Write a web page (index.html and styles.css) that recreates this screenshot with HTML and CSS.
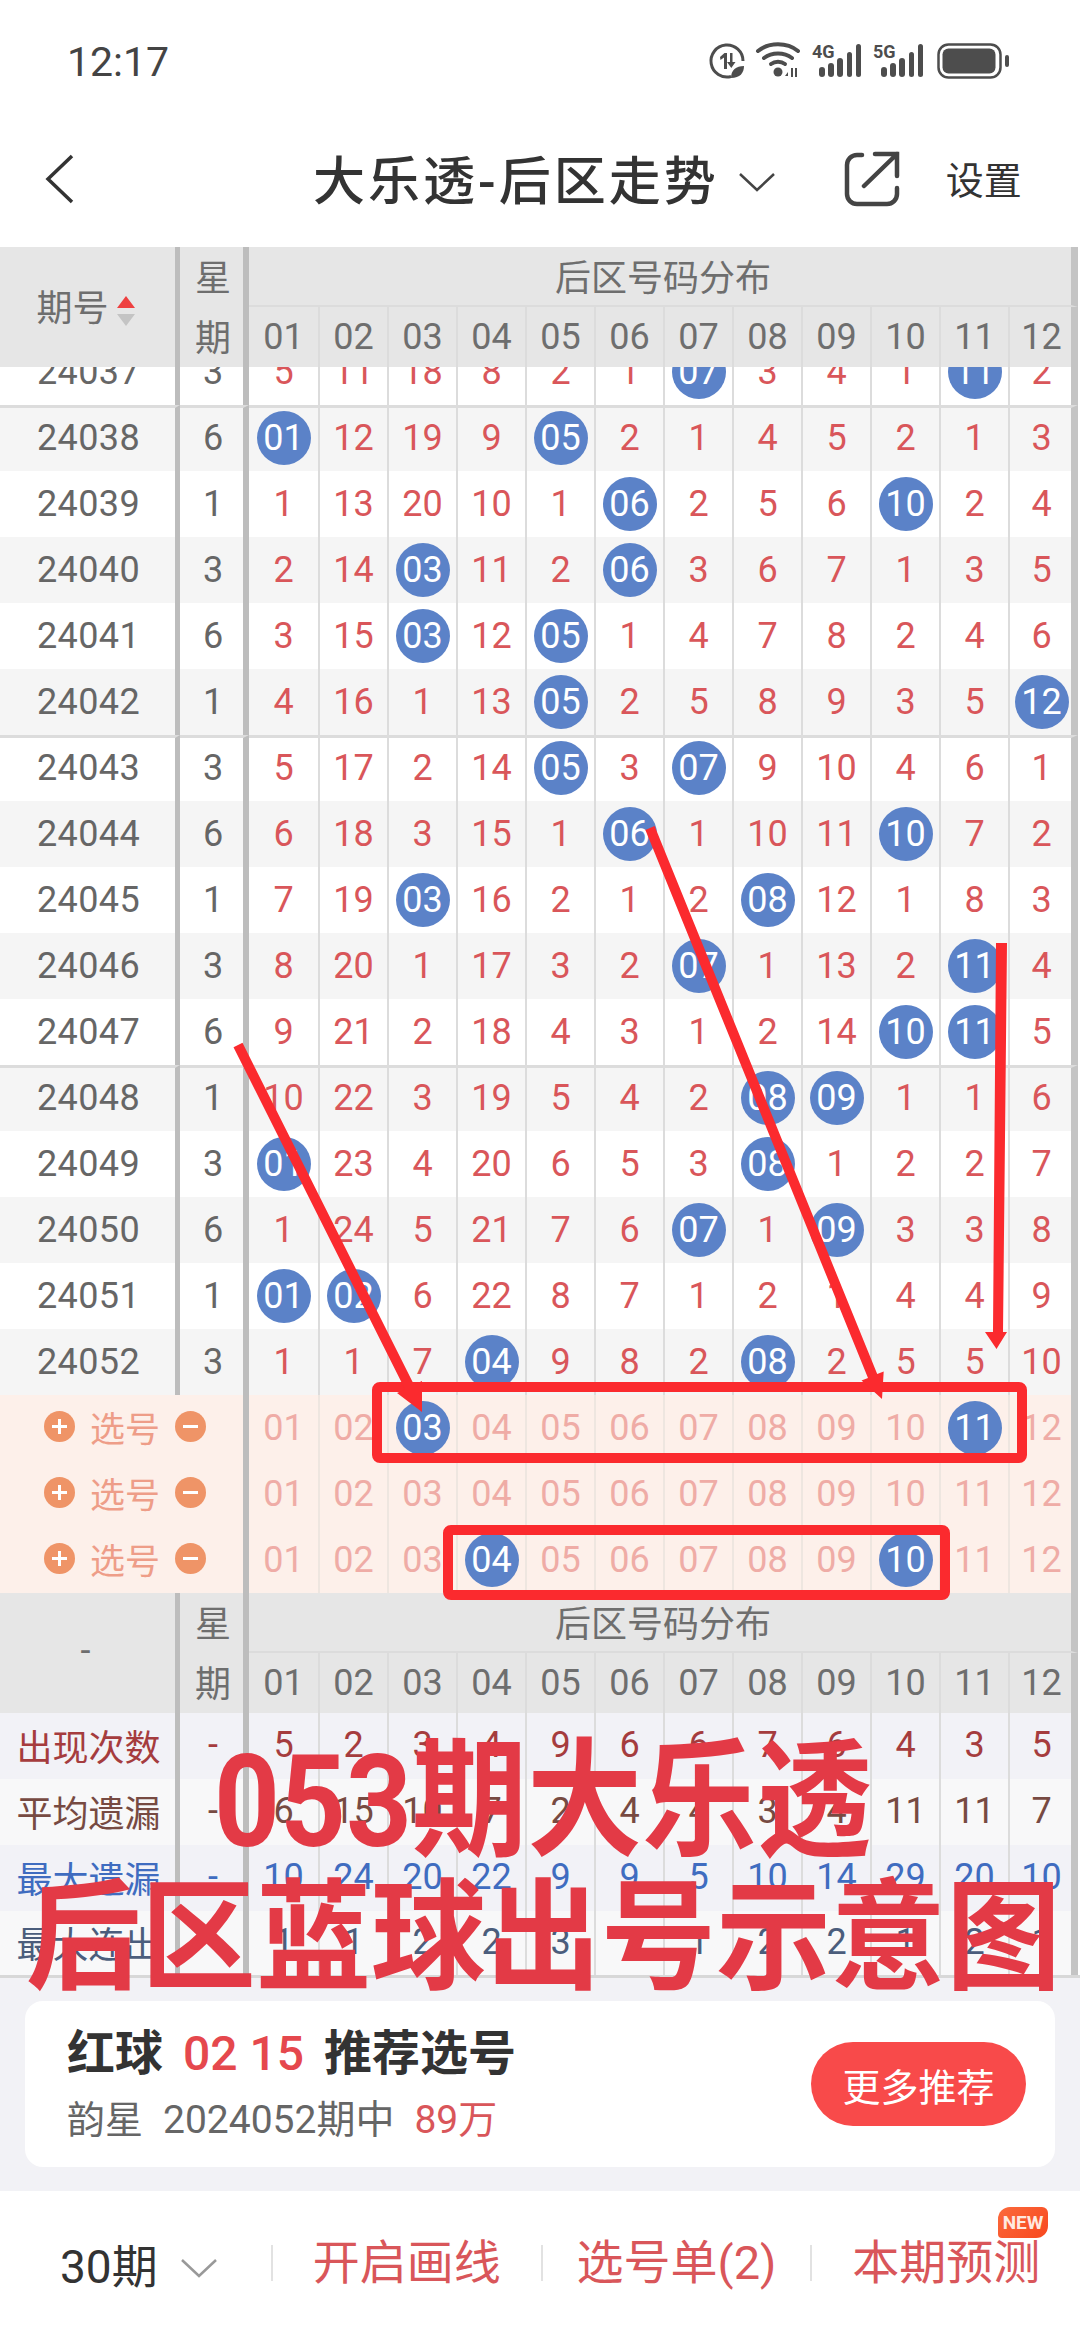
FILE: index.html
```html
<!DOCTYPE html>
<html lang="zh">
  <head>
    <meta charset="utf-8" />
    <title>大乐透-后区走势</title>
    <link rel="stylesheet" href="styles.css">
  </head>
  <body>
    <div class="page">
      <div class="status-bar">
        <span class="clock">12:17</span>
        <svg class="status-icons" width="220" height="40" viewBox="707 41 220 40" fill="#4d4d4d">
          <!-- data saver -->
          <path d="M731 76.500 A16 16 0 1 1 743 61" fill="none" stroke="#4d4d4d" stroke-width="3"/>
          <path d="M720 57l4.500-4h2.500v16h-3v-11.500l-3.500 2.500zM730 53h2.500v9h3l-4.200 6-4.300-6h3z"/>
          <path d="M731 78c0-8 5-12 13-12 0 7-4 12-13 12z"/>
          <!-- wifi -->
          <g fill="none" stroke="#4d4d4d" stroke-width="4" stroke-linecap="round">
            <path d="M758 51c11-9 29-9 40 0"/>
            <path d="M764 58c8-6 20-6 28 0"/>
            <path d="M771 64c4-3 10-3 14 0"/>
          </g>
          <circle cx="778" cy="72" r="4.500"/>
          <path d="M788 76v-4l-3 4zM791 68h2v9h-2zM795 68h2v9h-2z"/>
          <!-- 4G -->
          <text x="812" y="58" class="net-label">4G</text>
          <rect x="819" y="67" width="6" height="10" rx="3"/>
          <rect x="828" y="63" width="6" height="14" rx="3"/>
          <rect x="837" y="58" width="6" height="19" rx="3"/>
          <rect x="847" y="52" width="5" height="25" rx="2.500"/>
          <rect x="856" y="44" width="5" height="33" rx="2.500"/>
          <!-- 5G -->
          <text x="873" y="58" class="net-label">5G</text>
          <rect x="881" y="67" width="6" height="10" rx="3"/>
          <rect x="890" y="63" width="6" height="14" rx="3"/>
          <rect x="899" y="58" width="6" height="19" rx="3"/>
          <rect x="909" y="52" width="5" height="25" rx="2.500"/>
          <rect x="918" y="44" width="5" height="33" rx="2.500"/>
        </svg>
        <svg class="battery" width="72" height="36" viewBox="0 0 72 36">
          <rect x="1.500" y="1.500" width="62" height="33" rx="10" fill="none" stroke="#4d4d4d" stroke-width="2.500"/>
          <rect x="5.500" y="5.500" width="53" height="25" rx="6" fill="#4d4d4d"/>
          <rect x="68" y="12" width="4" height="12" rx="2" fill="#4d4d4d"/>
        </svg>
      </div>

      <div class="nav-bar">
        <svg class="nav-back" width="30" height="50" viewBox="0 0 30 50">
          <path d="M27 2 L3 25 L27 48" fill="none" stroke="#333" stroke-width="3.500"/>
        </svg>
        <h1 class="nav-title">大乐透-后区走势</h1>
        <svg class="nav-caret" width="38" height="20" viewBox="0 0 38 20">
          <path d="M2 2 L19 18 L36 2" fill="none" stroke="#444" stroke-width="2.500"/>
        </svg>
        <svg class="nav-share" width="56" height="56" viewBox="0 0 56 56">
          <path d="M18 4 H13 A10 10 0 0 0 3 14 V43 A10 10 0 0 0 13 53 H43 A10 10 0 0 0 53 43 V37" fill="none" stroke="#444" stroke-width="4.500" stroke-linecap="round"/>
          <path d="M20 35 L53 3 M31 3 H53 V25" fill="none" stroke="#444" stroke-width="4.500" stroke-linecap="round"/>
        </svg>
        <span class="nav-setting">设置</span>
      </div>

      <table class="trend trend-head">
        <colgroup><col class="c-period"><col class="c-week"><col class="c-first"><col span="10" class="c-num"><col class="c-last"></colgroup>
        <tr class="head-top">
          <th rowspan="2" class="bar-a">期号<span class="sort"><i class="sort-up"></i><i class="sort-down"></i></span></th>
          <th class="bar-b">星</th>
          <th colspan="12" class="head-group bar-end">后区号码分布</th>
        </tr>
        <tr class="head-nums">
          <th class="bar-b">期</th>
          <th>01</th><th>02</th><th>03</th><th>04</th><th>05</th><th>06</th><th>07</th><th>08</th><th>09</th><th>10</th><th>11</th><th class="bar-end">12</th>
        </tr>
      </table>

      <div class="trend-scroll">
        <table class="trend trend-body">
          <colgroup><col class="c-period"><col class="c-week"><col class="c-first"><col span="10" class="c-num"><col class="c-last"></colgroup>
          <tr><td class="bar-a">24037</td><td class="bar-b">3</td><td>5</td><td>11</td><td>18</td><td>8</td><td>2</td><td>1</td><td><b>07</b></td><td>3</td><td>4</td><td>1</td><td><b>11</b></td><td class="bar-end">2</td></tr>
          <tr class="alt sep"><td class="bar-a">24038</td><td class="bar-b">6</td><td><b>01</b></td><td>12</td><td>19</td><td>9</td><td><b>05</b></td><td>2</td><td>1</td><td>4</td><td>5</td><td>2</td><td>1</td><td class="bar-end">3</td></tr>
          <tr><td class="bar-a">24039</td><td class="bar-b">1</td><td>1</td><td>13</td><td>20</td><td>10</td><td>1</td><td><b>06</b></td><td>2</td><td>5</td><td>6</td><td><b>10</b></td><td>2</td><td class="bar-end">4</td></tr>
          <tr class="alt"><td class="bar-a">24040</td><td class="bar-b">3</td><td>2</td><td>14</td><td><b>03</b></td><td>11</td><td>2</td><td><b>06</b></td><td>3</td><td>6</td><td>7</td><td>1</td><td>3</td><td class="bar-end">5</td></tr>
          <tr><td class="bar-a">24041</td><td class="bar-b">6</td><td>3</td><td>15</td><td><b>03</b></td><td>12</td><td><b>05</b></td><td>1</td><td>4</td><td>7</td><td>8</td><td>2</td><td>4</td><td class="bar-end">6</td></tr>
          <tr class="alt"><td class="bar-a">24042</td><td class="bar-b">1</td><td>4</td><td>16</td><td>1</td><td>13</td><td><b>05</b></td><td>2</td><td>5</td><td>8</td><td>9</td><td>3</td><td>5</td><td class="bar-end"><b>12</b></td></tr>
          <tr class="sep"><td class="bar-a">24043</td><td class="bar-b">3</td><td>5</td><td>17</td><td>2</td><td>14</td><td><b>05</b></td><td>3</td><td><b>07</b></td><td>9</td><td>10</td><td>4</td><td>6</td><td class="bar-end">1</td></tr>
          <tr class="alt"><td class="bar-a">24044</td><td class="bar-b">6</td><td>6</td><td>18</td><td>3</td><td>15</td><td>1</td><td><b>06</b></td><td>1</td><td>10</td><td>11</td><td><b>10</b></td><td>7</td><td class="bar-end">2</td></tr>
          <tr><td class="bar-a">24045</td><td class="bar-b">1</td><td>7</td><td>19</td><td><b>03</b></td><td>16</td><td>2</td><td>1</td><td>2</td><td><b>08</b></td><td>12</td><td>1</td><td>8</td><td class="bar-end">3</td></tr>
          <tr class="alt"><td class="bar-a">24046</td><td class="bar-b">3</td><td>8</td><td>20</td><td>1</td><td>17</td><td>3</td><td>2</td><td><b>07</b></td><td>1</td><td>13</td><td>2</td><td><b>11</b></td><td class="bar-end">4</td></tr>
          <tr><td class="bar-a">24047</td><td class="bar-b">6</td><td>9</td><td>21</td><td>2</td><td>18</td><td>4</td><td>3</td><td>1</td><td>2</td><td>14</td><td><b>10</b></td><td><b>11</b></td><td class="bar-end">5</td></tr>
          <tr class="alt sep"><td class="bar-a">24048</td><td class="bar-b">1</td><td>10</td><td>22</td><td>3</td><td>19</td><td>5</td><td>4</td><td>2</td><td><b>08</b></td><td><b>09</b></td><td>1</td><td>1</td><td class="bar-end">6</td></tr>
          <tr><td class="bar-a">24049</td><td class="bar-b">3</td><td><b>01</b></td><td>23</td><td>4</td><td>20</td><td>6</td><td>5</td><td>3</td><td><b>08</b></td><td>1</td><td>2</td><td>2</td><td class="bar-end">7</td></tr>
          <tr class="alt"><td class="bar-a">24050</td><td class="bar-b">6</td><td>1</td><td>24</td><td>5</td><td>21</td><td>7</td><td>6</td><td><b>07</b></td><td>1</td><td><b>09</b></td><td>3</td><td>3</td><td class="bar-end">8</td></tr>
          <tr><td class="bar-a">24051</td><td class="bar-b">1</td><td><b>01</b></td><td><b>02</b></td><td>6</td><td>22</td><td>8</td><td>7</td><td>1</td><td>2</td><td>1</td><td>4</td><td>4</td><td class="bar-end">9</td></tr>
          <tr class="alt"><td class="bar-a">24052</td><td class="bar-b">3</td><td>1</td><td>1</td><td>7</td><td><b>04</b></td><td>9</td><td>8</td><td>2</td><td><b>08</b></td><td>2</td><td>5</td><td>5</td><td class="bar-end">10</td></tr>
        </table>
      </div>

      <table class="trend trend-pick">
        <colgroup><col class="c-period"><col class="c-week"><col class="c-first"><col span="10" class="c-num"><col class="c-last"></colgroup>
        <tr>
          <td colspan="2" class="bar-b"><div class="pick-label"><i class="pick-btn plus"></i>选号<i class="pick-btn minus"></i></div></td>
          <td>01</td><td>02</td><td><b>03</b></td><td>04</td><td>05</td><td>06</td><td>07</td><td>08</td><td>09</td><td>10</td><td><b>11</b></td><td class="bar-end">12</td>
        </tr>
        <tr>
          <td colspan="2" class="bar-b"><div class="pick-label"><i class="pick-btn plus"></i>选号<i class="pick-btn minus"></i></div></td>
          <td>01</td><td>02</td><td>03</td><td>04</td><td>05</td><td>06</td><td>07</td><td>08</td><td>09</td><td>10</td><td>11</td><td class="bar-end">12</td>
        </tr>
        <tr>
          <td colspan="2" class="bar-b"><div class="pick-label"><i class="pick-btn plus"></i>选号<i class="pick-btn minus"></i></div></td>
          <td>01</td><td>02</td><td>03</td><td><b>04</b></td><td>05</td><td>06</td><td>07</td><td>08</td><td>09</td><td><b>10</b></td><td>11</td><td class="bar-end">12</td>
        </tr>
      </table>

      <table class="trend trend-head">
        <colgroup><col class="c-period"><col class="c-week"><col class="c-first"><col span="10" class="c-num"><col class="c-last"></colgroup>
        <tr class="head-top">
          <th rowspan="2" class="bar-a">-</th>
          <th class="bar-b">星</th>
          <th colspan="12" class="head-group bar-end">后区号码分布</th>
        </tr>
        <tr class="head-nums">
          <th class="bar-b">期</th>
          <th>01</th><th>02</th><th>03</th><th>04</th><th>05</th><th>06</th><th>07</th><th>08</th><th>09</th><th>10</th><th>11</th><th class="bar-end">12</th>
        </tr>
      </table>

      <table class="trend trend-stats">
        <colgroup><col class="c-period"><col class="c-week"><col class="c-first"><col span="10" class="c-num"><col class="c-last"></colgroup>
        <tr class="stat-count"><td class="bar-a">出现次数</td><td class="bar-b">-</td><td>5</td><td>2</td><td>3</td><td>4</td><td>9</td><td>6</td><td>6</td><td>7</td><td>6</td><td>4</td><td>3</td><td class="bar-end">5</td></tr>
        <tr class="stat-avg"><td class="bar-a">平均遗漏</td><td class="bar-b">-</td><td>6</td><td>15</td><td>10</td><td>7</td><td>2</td><td>4</td><td>4</td><td>3</td><td>4</td><td>11</td><td>11</td><td class="bar-end">7</td></tr>
        <tr class="stat-max"><td class="bar-a">最大遗漏</td><td class="bar-b">-</td><td>10</td><td>24</td><td>20</td><td>22</td><td>9</td><td>9</td><td>5</td><td>10</td><td>14</td><td>29</td><td>20</td><td class="bar-end">10</td></tr>
        <tr class="stat-run"><td class="bar-a">最大连出</td><td class="bar-b">-</td><td>1</td><td>1</td><td>2</td><td>2</td><td>3</td><td>1</td><td>1</td><td>2</td><td>2</td><td>1</td><td>2</td><td class="bar-end">1</td></tr>
      </table>

      <div class="promo-area">
        <div class="promo-card">
          <div class="promo-text">
            <div class="promo-title">红球<span class="promo-nums">02 15</span>推荐选号</div>
            <div class="promo-sub">韵星<span class="promo-issue">2024052期中</span><span class="promo-win">89万</span></div>
          </div>
          <button class="promo-btn">更多推荐</button>
        </div>
      </div>

      <div class="tool-bar">
        <div class="tool-period">30期
          <svg width="38" height="20" viewBox="0 0 38 20">
            <path d="M2 2 L19 18 L36 2" fill="none" stroke="#999" stroke-width="2.500"/>
          </svg>
        </div>
        <div class="tool-item">开启画线</div>
        <div class="tool-item">选号单(2)</div>
        <div class="tool-item">本期预测</div>
        <span class="badge-new">NEW</span>
      </div>

      <!-- hand drawn marks on top of the chart -->
      <svg class="marks" width="1080" height="2340" viewBox="0 0 1080 2340">
        <rect x="377" y="1387" width="645" height="71" rx="3" fill="none" stroke="#fb2a2e" stroke-width="10"/>
        <rect x="448" y="1530" width="497" height="65" rx="3" fill="none" stroke="#fb2a2e" stroke-width="10"/>
        <polygon points="242.500,1042.800 414,1384.800 422,1381 422,1412 397,1393 405,1389.200 233.500,1047.200" fill="#fb2a2e"/>
        <polygon points="654.600,826.100 877.200,1374.100 883.700,1371.500 882,1399 861.500,1380.500 868,1377.900 645.400,829.900" fill="#fb2a2e"/>
        <polygon points="996,943 1007,943 1003,1332 1007,1332 996.500,1349 985,1332 993,1332" fill="#fb2a2e"/>
      </svg>

      <div class="caption">
        <div class="caption-one">053期大乐透</div>
        <div class="caption-two">后区蓝球出号示意图</div>
      </div>
    </div>
  </body>
</html>
```

FILE: styles.css
```css
* {
  box-sizing: border-box;
}
body {
  margin: 0;
  background-color: #fff;
  color: #333;
  font-family: Roboto, "Noto Sans CJK SC", sans-serif;
}
.page {
  position: relative;
  width: 1080px;
  height: 2340px;
  overflow: hidden;
}

/* status bar */
.status-bar {
  display: flex;
  align-items: center;
  height: 110px;
  padding: 14px 0 0 67px;
  color: #444;
}
.clock {
  font-size: 41px;
}
.status-icons {
  margin-left: auto;
  margin-top: -3px;
}
.battery {
  margin: -3px 71px 0 10px;
}
.net-label {
  font-family: Roboto, sans-serif;
  font-size: 18px;
  font-weight: 700;
}

/* nav bar */
.nav-bar {
  display: flex;
  align-items: center;
  height: 137px;
  padding-left: 45px;
}
.nav-title {
  margin: -3px 0 0 238px;
  font-size: 52px;
  font-weight: 500;
  letter-spacing: 3px;
  color: #333;
}
.nav-caret {
  margin: 6px 0 0 19px;
}
.nav-share {
  margin-left: 68px;
}
.nav-setting {
  margin: -2px 0 0 46px;
  font-size: 38px;
}

/* chart tables */
.trend {
  table-layout: fixed;
  border-collapse: separate;
  border-spacing: 0;
  width: 1078px;
  font-size: 36px;
  font-weight: 400;
  text-align: center;
}
.trend th,
.trend td {
  padding: 0;
  font-weight: 400;
  border-right: 2px solid #dcdcdc;
}
.c-period {
  width: 180px;
}
.c-week {
  width: 69px;
}
.c-first {
  width: 71px;
}
.c-num {
  width: 69px;
}
.c-last {
  width: 68px;
}
.trend .bar-a {
  border-right: 5px solid #bdbdbd;
  padding-left: 2px;
}
.trend .bar-b {
  border-right: 6px solid #bdbdbd;
  padding-left: 3px;
}
.trend .bar-end {
  border-right: 7px solid #c4c4c4;
  padding-left: 2px;
}
.trend b {
  display: block;
  width: 54px;
  height: 54px;
  margin: 0 auto;
  border-radius: 50%;
  background-color: #5b82c8;
  color: #fff;
  font-weight: 400;
  line-height: 54px;
}

/* header rows */
.trend-head {
  background-color: #e6e6e6;
  color: #6e6e6e;
}
.trend-head th {
  height: 60px;
}
.trend-head .bar-b {
  padding-bottom: 4px;
}
.trend-head .bar-a {
  padding: 0 4px 4px 0;
}
.head-top .head-group {
  border-bottom: 2px solid #dcdcdc;
  padding: 0 0 2px 6px;
}
.sort {
  display: inline-block;
  margin-left: 8px;
  vertical-align: middle;
}
.sort i {
  display: block;
  width: 0;
  height: 0;
  border-left: 9px solid transparent;
  border-right: 9px solid transparent;
}
.sort-up {
  border-bottom: 12px solid #ee4040;
  margin-bottom: 6px;
}
.sort-down {
  border-top: 12px solid #c4c4c4;
}

/* history rows */
.trend-scroll {
  height: 1028px;
  overflow: hidden;
}
.trend-body {
  margin-top: -28px;
  color: #d9565a;
}
.trend-body td {
  height: 66px;
}
.trend-body .bar-a {
  letter-spacing: 0.400px;
}
.trend-body .bar-a,
.trend-body .bar-b {
  color: #666;
}
.trend-body .alt td {
  background-color: #f5f5f5;
}
.trend-body .sep td {
  border-top: 3px solid #dcdcdc;
  padding-bottom: 3px;
}

/* pick rows */
.trend-pick {
  background-color: #fdf0ea;
  color: #efaca6;
}
.trend-pick td {
  height: 66px;
  border-right-color: #eee6e0;
}
.pick-label {
  display: flex;
  align-items: center;
  justify-content: center;
  gap: 15px;
  padding: 0 0 4px 4px;
  font-size: 35px;
  color: #ee9d88;
}
.pick-btn {
  width: 31px;
  height: 31px;
  border-radius: 50%;
}
.plus {
  background: linear-gradient(#fff, #fff) center / 15px 3px no-repeat,
    linear-gradient(#fff, #fff) center / 3px 15px no-repeat,
    #ef9467;
}
.minus {
  background: linear-gradient(#fff, #fff) center / 15px 3px no-repeat,
    #ef9467;
}

/* stats rows */
.trend-stats td {
  height: 66px;
  padding-bottom: 2px;
}
.trend-stats .stat-run td {
  height: 64px;
}
.stat-count td {
  background-color: #f2f2f7;
  color: #a53c3e;
}
.stat-avg td {
  background-color: #f8f8f9;
  color: #774a42;
}
.stat-max td {
  background-color: #f2f2f7;
  color: #3f6cc0;
}
.stat-run td {
  background-color: #f8f8f9;
  color: #4b5d7c;
}

/* promo card */
.promo-area {
  height: 216px;
  padding: 23px 25px 0;
  border-top: 3px solid #d8d8d8;
  background-color: #f2f2f6;
}
.promo-card {
  display: flex;
  align-items: center;
  justify-content: space-between;
  height: 166px;
  padding: 0 29px 0 42px;
  border-radius: 18px;
  background-color: #fff;
}
.promo-text {
  margin-top: -11px;
}
.promo-title {
  font-size: 48px;
  font-weight: 700;
  color: #333;
}
.promo-nums {
  margin: 0 20px 0 20px;
  color: #e5484d;
  font-size: 48px;
  font-weight: 500;
}
.promo-sub {
  margin-top: 4px;
  font-size: 38px;
  color: #666;
}
.promo-issue {
  margin-left: 20px;
  font-size: 39px;
}
.promo-win {
  margin-left: 20px;
  color: #d9565a;
  font-size: 39px;
}
.promo-btn {
  width: 215px;
  height: 84px;
  border: none;
  border-radius: 42px;
  background-color: #f84a4a;
  color: #fff;
  font-family: inherit;
  font-size: 38px;
}

/* bottom bar */
.tool-bar {
  position: relative;
  display: flex;
  align-items: center;
  height: 149px;
  padding-bottom: 6px;
}
.tool-period {
  display: flex;
  align-items: center;
  gap: 22px;
  width: 271px;
  padding-left: 60px;
  font-size: 46px;
  color: #333;
}
.tool-period svg {
  margin-top: 10px;
}
.tool-item {
  flex: 1;
  height: 36px;
  line-height: 36px;
  border-left: 2px solid #e2e2e2;
  font-size: 47px;
  text-align: center;
  color: #d9565a;
}
.badge-new {
  position: absolute;
  top: 16px;
  left: 998px;
  width: 50px;
  height: 31px;
  border-radius: 12px 6px 12px 4px;
  background: linear-gradient(135deg, #fb6a3c, #f8481e);
  color: #ffe9e0;
  font-size: 19px;
  font-weight: 700;
  line-height: 31px;
  text-align: center;
}

/* overlays */
.marks {
  position: absolute;
  top: 0;
  left: 0;
}
.caption {
  position: absolute;
  top: 1725px;
  left: 0;
  color: #e33a46;
  font-weight: 700;
  font-size: 115px;
  line-height: 137px;
  white-space: nowrap;
}
.caption-one {
  margin-left: 214px;
  transform: scaleY(1.12);
  transform-origin: top;
}
.caption-two {
  margin: 5px 0 0 26px;
  transform: scaleY(1.05);
  transform-origin: top;
}
```
